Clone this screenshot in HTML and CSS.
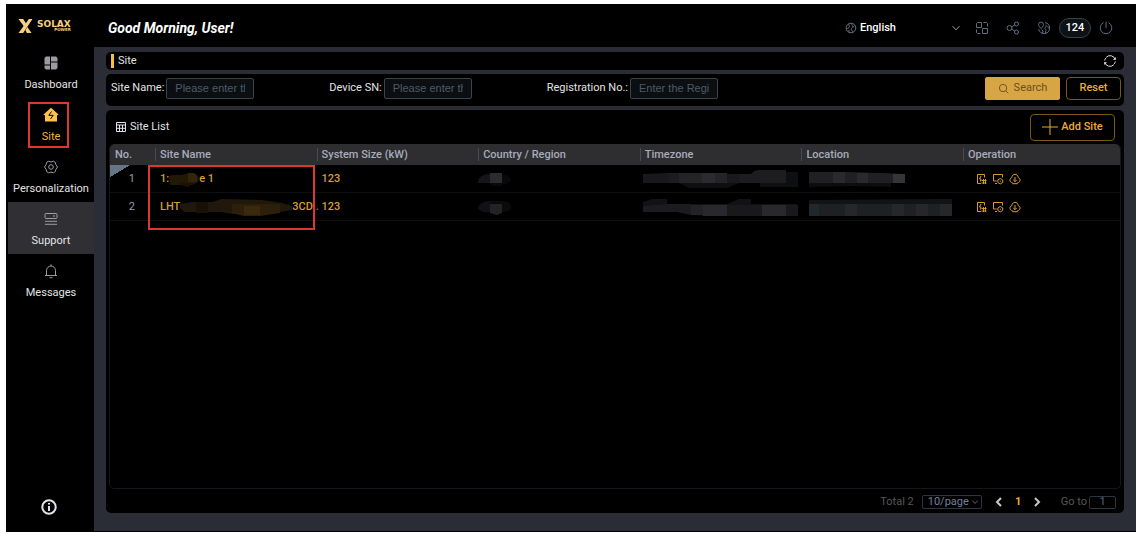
FILE: index.html
```html
<!DOCTYPE html>
<html lang="en">
<head>
<meta charset="utf-8">
<title>Site</title>
<link rel="stylesheet" href="styles.css">
</head>
<body>
<svg class="defs" aria-hidden="true">
  <symbol id="op-device" viewBox="0 0 12 12"><path d="M9.500 4.500V1.500H2.500v9H6M6 3 4.500 6H6L5.500 8.500M8.500 6v5M6.500 7.500h5M6.500 10h5M10.500 6v5"/></symbol>
  <symbol id="op-config" viewBox="0 0 12 12"><path d="M10.500 4.500V1.500h-9v6.500h3.200M3 10.500h2"/><path d="M8.300 5.500l2.400 1.400v2.600l-2.400 1.400-2.400-1.400V6.900zM8.300 7.700v1"/></symbol>
  <symbol id="op-cloud" viewBox="0 0 12 12"><path d="M3.600 9.700C1.800 9.500.8 8.200.9 6.900 1 5.700 1.900 4.900 2.700 4.700 3 2.500 4.400 1.300 6 1.300s3 1.200 3.300 3.400c.8.2 1.700 1 1.800 2.200.1 1.300-.9 2.600-2.700 2.800M3.200 10.700h5.600M6 4v4.500M4.200 6.900 6 8.700l1.800-1.800"/></symbol>
  <symbol id="chev" viewBox="0 0 10 10"><path d="M1.500 3.200 5 6.800l3.500-3.600"/></symbol>
</svg>
<div class="app">
  <aside class="side">
    <div class="logo">
      <svg class="logo-x" viewBox="0 0 15 15"><path d="M0 0h5l3 4.600L11 0h4L5 15H0l5.500-7.500z"/><path d="M9.500 8.500 14 15H9L7.400 12z"/></svg>
      <div class="logo-text"><span class="logo-name">SOLAX</span><span class="logo-sub">POWER</span></div>
    </div>
    <nav class="nav">
      <a class="nav-item" href="#">
        <svg class="nav-icon solid" viewBox="0 0 16 16"><path d="M3 1.500h4v8H1.500V3zM1.500 10.500H7v4H3L1.500 13zM8 1.500h5L14.500 3v3.500H8zM8 7.500h6.500V13L13 14.500H8z"/></svg>
        <span>Dashboard</span></a>
      <a class="nav-item active" href="#">
        <svg class="nav-icon solid" viewBox="0 0 16 16"><path d="M8 .7 15.500 7.500 14 8.600V14.500H2V8.600L.5 7.500z"/><path class="bolt" d="M8.500 4.500 5.800 8.300h4.400L7.500 12"/></svg>
        <span>Site</span><i class="mark mark-nav"></i></a>
      <a class="nav-item" href="#">
        <svg class="nav-icon" viewBox="0 0 16 16"><path d="M5.600 2.200 8 3l2.400-.8 1.900 1.100.5 2.200L14.500 8l-1.700 2.500-.5 2.200-1.900 1.100L8 13l-2.400.8-1.900-1.100-.5-2.200L1.500 8l1.700-2.500.5-2.200z"/><circle cx="8" cy="8" r="2.300"/></svg>
        <span>Personalization</span></a>
      <a class="nav-item hover" href="#">
        <svg class="nav-icon" viewBox="0 0 16 16"><rect x="2" y="2.500" width="12" height="5" rx="1"/><path d="M10 5h2M2 10.300h12M2 13.300h12"/></svg>
        <span>Support</span></a>
      <a class="nav-item" href="#">
        <svg class="nav-icon" viewBox="0 0 16 16"><path d="M2 12.500h12M3.500 12.500V7.500a4.500 4.500 0 0 1 9 0v5M8 3V1.300M6.500 14.700h3"/></svg>
        <span>Messages</span></a>
    </nav>
    <button class="info" aria-label="About"><svg viewBox="0 0 16 16"><circle cx="8" cy="8" r="6.700"/><path d="M8 7v5M8 4v1.600"/></svg></button>
  </aside>

  <div class="body">
    <header class="top">
      <h1 class="greeting">Good Morning, User!</h1>
      <div class="lang">
        <svg class="ic" viewBox="0 0 12 12"><circle cx="6" cy="6" r="4.800"/><path d="M4 1.800c-.5 1.500.6 2 .5 3-.2 1-1.800.7-2 2.200M4 10.600c.2-1.500-.5-2 .5-2.800M7 1.500c-.6 1.700 1 2 1 3.200S6 6 6.300 7.500s1.500.9 1.300 3M9.500 4 8 5"/></svg>
        <select aria-label="Language"><option>English</option></select>
        <svg class="ic chev-lg" viewBox="0 0 10 10"><use href="#chev"/></svg>
      </div>
      <div class="tools">
        <button class="tool" aria-label="Switch layout"><svg viewBox="0 0 14 14"><path d="M2.500 1.500h4v5h-5v-4zM7.500 7.500h5v5h-5zM8.500 1.500h3l1 1v3M1.500 8.500v3l1 1h3"/></svg></button>
        <button class="tool" aria-label="Share"><svg viewBox="0 0 14 14"><circle cx="3.500" cy="7" r="2.500"/><circle cx="10.500" cy="3" r="2"/><circle cx="10.500" cy="11" r="2"/><path d="M5.500 5.900 8.800 4M5.500 8.100 8.800 10"/></svg></button>
        <button class="tool" aria-label="Map"><svg viewBox="0 0 14 14"><path d="M4 7.500C2 5.500 1.500 4.500 1.500 3.600a2.500 2.500 0 0 1 5 0C6.500 4.500 6 5.500 4 7.500zM8 1.600a5.600 5.600 0 0 1 0 11A5.600 5.600 0 0 1 1.600 8M8.500 4c2 .5 0 2-.5 3s1 1 1 2-.7 1.500-.5 3M4.500 8.500 6 10l-.5 2M4 3.500v.3M10.500 5.500l1.500 2"/></svg></button>
        <button class="count">124</button>
        <button class="tool" aria-label="Log out"><svg viewBox="0 0 14 14"><path d="M4.500 1.700a5.800 5.800 0 1 0 5 0M7 .8V7"/></svg></button>
      </div>
    </header>

    <main class="main">
      <section class="panel title-bar">
        <h2>Site</h2>
        <button class="refresh" aria-label="Refresh"><svg viewBox="0 0 14 14"><path d="M1.800 8.300a5.300 5.300 0 0 0 9 2.400M12.200 5.700a5.300 5.300 0 0 0-9-2.400M1.700 6.500a5.300 5.300 0 0 1 1-2.400M12.300 7.500a5.300 5.300 0 0 1-1 2.400"/><path class="tip" d="M10 5.800h2.800V3zM4 8.200H1.200V11z"/></svg></button>
      </section>

      <form class="panel filters">
        <label class="field">Site Name: <input type="text" placeholder="Please enter the site name"></label>
        <label class="field">Device SN: <input type="text" placeholder="Please enter the device SN"></label>
        <label class="field">Registration No.: <input type="text" placeholder="Enter the Registration No."></label>
        <div class="actions">
          <button type="button" class="btn primary"><svg viewBox="0 0 12 12"><circle cx="5.500" cy="5.500" r="4"/><path d="m8.500 8.500 2.500 2.700"/></svg>Search</button>
          <button type="button" class="btn">Reset</button>
        </div>
      </form>

      <section class="panel list">
        <div class="list-head">
          <h3><svg viewBox="0 0 12 12"><path d="M1.500 1.500h9v9h-9zM1.500 4h9M1.500 7.300h9M4.500 4v6.500M7.500 4v6.500"/></svg>Site List</h3>
          <button class="btn add"><svg viewBox="0 0 16 16"><path d="M8 0v16M0 8h16"/></svg>Add Site</button>
        </div>
        <div class="table-box">
          <i class="mark mark-rows"></i>
          <table>
            <colgroup><col class="c-no"><col class="c"><col class="c"><col class="c"><col class="c"><col class="c"><col></colgroup>
            <thead><tr><th>No.</th><th>Site Name</th><th>System Size (kW)</th><th>Country / Region</th><th>Timezone</th><th>Location</th><th>Operation</th></tr></thead>
            <tbody>
              <tr>
                <td class="no first">1</td>
                <td><a class="name" href="#"><span>1:</span><svg class="mosaic" width="30" height="18" viewBox="0 0 30 18"><path fill="#211806" d="M0 7 2 5l10 0 8-2 7 1 3 4-1 4-6 3H1z"/><path fill="#342509" d="M19 3h6l3 3v6h-9z"/><path fill="#1a1204" d="M12 13h11l-3 4-6-1z"/></svg><span>e 1</span></a></td>
                <td><a href="#">123</a></td>
                <td class="hid"><svg class="mosaic" width="34" height="18" viewBox="0 0 34 18"><path fill="#15151a" d="M0 12q1-8 12-8v9H0z"/><path fill="#2b2b31" d="M12 3h12v10H12z"/><path fill="#09090a" d="M24 4q9 1 9 7l-5 3h-4zM12 13h12v3H14z"/></svg></td>
                <td class="hid tz"><svg class="mosaic" width="155" height="18" viewBox="0 0 155 18"><path fill="#19191b" d="M0 4 26 3v10H0zM84 4h12v9H84z"/><path fill="#242427" d="M36 3h48v10H36z"/><path fill="#1d1d20" d="M26 3h10v10H26zM96 4h12q3-4 9-4h26v13H96z"/><path fill="#2a2a2f" d="M59 3h13v10H59z"/><path fill="#0e0f10" d="M36 13h60l-12 5H46zM117 13h26v4h-26zM143 2h12v15h-12z"/></svg></td>
                <td class="hid loc"><svg class="mosaic" width="96" height="18" viewBox="0 0 96 18"><path fill="#202024" d="M0 2h36l36 1 24 1v9H0z"/><path fill="#2a2a2e" d="M24 2h12v11H24zM48 3h11v10H48z"/><path fill="#343439" d="M84 4h12v9H84z"/><path fill="#0d0d0f" d="M0 13h82v4l-40-1-42 1z"/></svg></td>
                <td><div class="ops"><button aria-label="Devices"><svg><use href="#op-device"/></svg></button><button aria-label="Configure"><svg><use href="#op-config"/></svg></button><button aria-label="Download"><svg><use href="#op-cloud"/></svg></button></div></td>
              </tr>
              <tr>
                <td class="no">2</td>
                <td><a class="name" href="#"><span>LHT</span><svg class="mosaic" width="112" height="18" viewBox="0 0 112 18"><path fill="#20180a" d="M0 6 12 4h20l10-3 40 1 20 3 10 3v4l-18 3-12 2-28-1-14-2H4L0 10z"/><path fill="#171106" d="M16 4h12v11H16z"/><path fill="#2d200a" d="M52 6h48v9l-20 3H64l-12-3z"/><path fill="#3a290d" d="M64 8h16v9H64z"/></svg><span>3CD</span><span class="dots">..</span></a></td>
                <td><a href="#">123</a></td>
                <td class="hid"><svg class="mosaic" width="34" height="18" viewBox="0 0 34 18"><path fill="#121214" d="M0 10q1-6 12-7v11Q2 15 0 10z"/><path fill="#232326" d="M12 6h12v9l-5 2-7-2z"/><path fill="#0b0b0c" d="M12 3h12v3H12zM24 3q9 1 9 6t-9 5z"/></svg></td>
                <td class="hid tz"><svg class="mosaic" width="155" height="18" viewBox="0 0 155 18"><path fill="#121214" d="M0 4 9 1h15v5h60l12-5h12v5h46v2H0z"/><path fill="#1c1c1f" d="M0 8 24 6h24v11l-14-3H0z"/><path fill="#232326" d="M48 7h36v11l-36-1z"/><path fill="#28282d" d="M60 7h24v11H60zM119 7h24v11h-24z"/><path fill="#19191c" d="M84 7h35v11H84zM143 7h12v11h-12z"/></svg></td>
                <td class="hid loc"><svg class="mosaic" width="143" height="18" viewBox="0 0 143 18"><path fill="#121315" d="M0 2 132 1h11v6H0z"/><path fill="#1f2024" d="M0 6h143v12H0z"/><path fill="#22272c" d="M0 6h10v12H0z"/><path fill="#26262b" d="M36 6h12v12H36zM83 6h12v12H83zM107 6h12v12h-12zM131 6h12v12h-12z"/></svg></td>
                <td><div class="ops"><button aria-label="Devices"><svg><use href="#op-device"/></svg></button><button aria-label="Configure"><svg><use href="#op-config"/></svg></button><button aria-label="Download"><svg><use href="#op-cloud"/></svg></button></div></td>
              </tr>
            </tbody>
          </table>
        </div>
        <footer class="pager">
          <span class="total">Total 2</span>
          <div class="size"><select aria-label="Page size"><option>10/page</option></select><svg viewBox="0 0 10 10"><use href="#chev"/></svg></div>
          <button class="step" aria-label="Previous"><svg viewBox="0 0 10 10"><path d="M7 1 3 5l4 4"/></svg></button>
          <button class="step page">1</button>
          <button class="step" aria-label="Next"><svg viewBox="0 0 10 10"><path d="m3 1 4 4-4 4"/></svg></button>
          <label class="goto">Go to<input type="text" value="1"></label>
        </footer>
      </section>
    </main>
  </div>
</div>
</body>
</html>
```
FILE: styles.css
```css
* { box-sizing: border-box; }
body { margin: 0; height: 100vh; padding: 4px 6px 6px 6px; background: #fff; font: 11px/16px Roboto, "Liberation Sans", sans-serif; color: #e2e3e6; }
svg { fill: none; stroke: currentColor; flex: none; display: block; }
h1, h2, h3 { margin: 0; font-weight: 400; font-size: 11px; }
a { color: inherit; text-decoration: none; }
button, input, select { font: inherit; color: inherit; background: none; border: 0; padding: 0; margin: 0; }
button { display: flex; align-items: center; justify-content: center; cursor: pointer; }
select { appearance: none; }
.defs { position: absolute; width: 0; height: 0; }
.mosaic { stroke: none; }
.app { display: flex; height: 100%; background: #000; border-bottom: 1px solid #000; }

.side { width: 88px; flex: none; padding-left: 2px; display: flex; flex-direction: column; }
.logo { height: 42px; padding: 2px 0 0 10px; display: flex; align-items: center; gap: 4px; color: #f6cf83; }
.logo-x { width: 15px; height: 14px; fill: currentColor; stroke: none; }
.logo-text { display: flex; flex-direction: column; align-items: flex-end; font-family: "DejaVu Sans", sans-serif; font-weight: 700; }
.logo-name { font-size: 9px; line-height: 7px; }
.logo-sub { font-size: 4px; line-height: 4px; }
.nav { flex: 1; }
.nav-item { position: relative; height: 52px; padding-top: 9px; display: flex; flex-direction: column; align-items: center; gap: 6px; }
.nav-icon { width: 16px; height: 16px; color: #9a9ca2; }
.solid { fill: currentColor; stroke: none; }
.active { color: #f4b533; }
.active .nav-icon { color: #ffc247; }
.bolt { fill: none; stroke: #000; }
.hover { background: #303034; }
.mark { position: absolute; border: 2px solid #e03535; pointer-events: none; z-index: 1; }
.mark-nav { inset: 4px 25px 2px 20px; }
.mark-rows { left: 38px; top: 21px; width: 167px; height: 65px; }
.info { height: 48px; margin-right: 5px; }
.info svg { width: 16px; height: 16px; stroke-width: 2; }

.body { flex: 1; min-width: 0; display: flex; flex-direction: column; }
.top { height: 43px; padding: 4px 23px 0 14px; display: flex; align-items: center; }
.greeting { flex: 1; font-size: 14px; font-weight: 700; font-style: italic; color: #fff; }
.lang { display: flex; align-items: center; gap: 3px; color: #fff; font-weight: 500; }
.lang select { width: 88px; }
.ic { width: 12px; height: 12px; color: #66717f; }
.chev-lg { width: 10px; height: 10px; color: #9a9fa6; }
.tools { display: flex; align-items: center; gap: 17px; margin-left: 14px; color: #5f6f80; }
.tool svg { width: 14px; height: 14px; }
.count { width: 32px; height: 20px; margin: 0 -9px; border: 1px solid #36424d; border-radius: 10px; background: #0e1216; color: #fff; font-weight: 500; }

.main { flex: 1; background: #2b2d36; padding: 5px 12px 18px; display: flex; flex-direction: column; gap: 4px; min-height: 0; }
.panel { background: #000; border-radius: 5px; }
.title-bar { display: flex; align-items: center; justify-content: space-between; height: 18px; padding: 0 7px 0 5px; }
.title-bar h2 { border-left: 3px solid #f9bd44; padding-left: 4px; line-height: 14px; }
.refresh svg { width: 14px; height: 14px; }
.tip { fill: currentColor; stroke: none; }
.filters { display: flex; align-items: center; gap: 75px; height: 32px; padding: 0 3px 4px 5px; }
.field { display: flex; align-items: center; gap: 2px; white-space: nowrap; }
.field input { width: 88px; height: 21px; padding: 0 8px; border: 1px solid #3a434b; border-radius: 2px; background: #0c0f11; font-family: "Liberation Sans", sans-serif; }
.field input::placeholder { color: #4e5b68; }
.actions { display: flex; gap: 6px; margin-left: auto; }
.btn { height: 23px; width: 55px; border: 1px solid #785819; border-radius: 4px; color: #e9ac35; gap: 5px; font-weight: 500; }
.btn.primary { width: 75px; background: #d7a544; border-color: #d7a544; border-radius: 2px; color: #69501f; font-weight: 400; }
.primary svg { width: 11px; height: 11px; }
.list { flex: 1; min-height: 0; display: flex; flex-direction: column; padding: 0 3px; }
.list-head { height: 34px; padding: 0 6px; display: flex; align-items: center; justify-content: space-between; }
.list-head h3 { display: flex; align-items: center; gap: 3px; }
.list-head h3 svg { width: 12px; height: 12px; }
.btn.add { width: 85px; height: 27px; gap: 3px; }
.add svg { width: 16px; height: 16px; }

.table-box { position: relative; flex: 1; border: 1px solid #14161d; border-radius: 5px; border-width: 0 1px 1px; }
table { width: 100%; table-layout: fixed; border-collapse: separate; border-spacing: 0; }
.c-no { width: 45px; }
.c { width: 16%; }
th { height: 21px; padding: 0 5px; background: #2e2e31; color: #a7abbb; font-weight: 500; text-align: left; white-space: nowrap; }
th:first-child { border-radius: 5px 0 0; }
th:last-child { border-radius: 0 5px 0 0; }
th + th { background: linear-gradient(#494b50, #494b50) 0 4px / 1px 13px no-repeat #2e2e31; }
td { height: 28px; padding: 0 5px; border-bottom: 1px solid #0e0f11; color: #d79d2b; font-weight: 500; white-space: nowrap; }
.no { text-align: right; padding-right: 20px; color: #9a9ca5; font-weight: 400; }
.first { background: linear-gradient(to bottom right, #657787 50%, transparent 51%) 0 0 / 20px 12px no-repeat; }
.name { display: flex; align-items: center; }
.dots { color: #77797f; }
.hid { padding: 0; }
.tz { padding-left: 3px; }
.loc { padding-left: 8px; }
.ops { display: flex; gap: 5px; padding-left: 7px; }
.ops svg { width: 12px; height: 12px; }

.pager { height: 24px; padding: 2px 5px 0 0; display: flex; align-items: center; justify-content: flex-end; color: #55575c; }
.total { margin-right: 8px; }
.size { display: flex; align-items: center; width: 60px; height: 14px; border: 1px solid #2b3640; border-radius: 2px; padding-left: 5px; margin-right: 8px; color: #747f9b; }
.size select { width: 43px; flex: none; line-height: 12px; }
.size svg { width: 8px; height: 8px; }
.step { width: 19px; height: 16px; color: #c6c8cc; }
.step svg { width: 10px; height: 10px; stroke-width: 2; }
.page { color: #f2ab2a; font-weight: 700; }
.goto { display: flex; align-items: center; gap: 2px; margin-left: 14px; }
.goto input { width: 27px; height: 13px; border: 1px solid #2b3640; border-radius: 2px; text-align: center; color: #566680; }
```
